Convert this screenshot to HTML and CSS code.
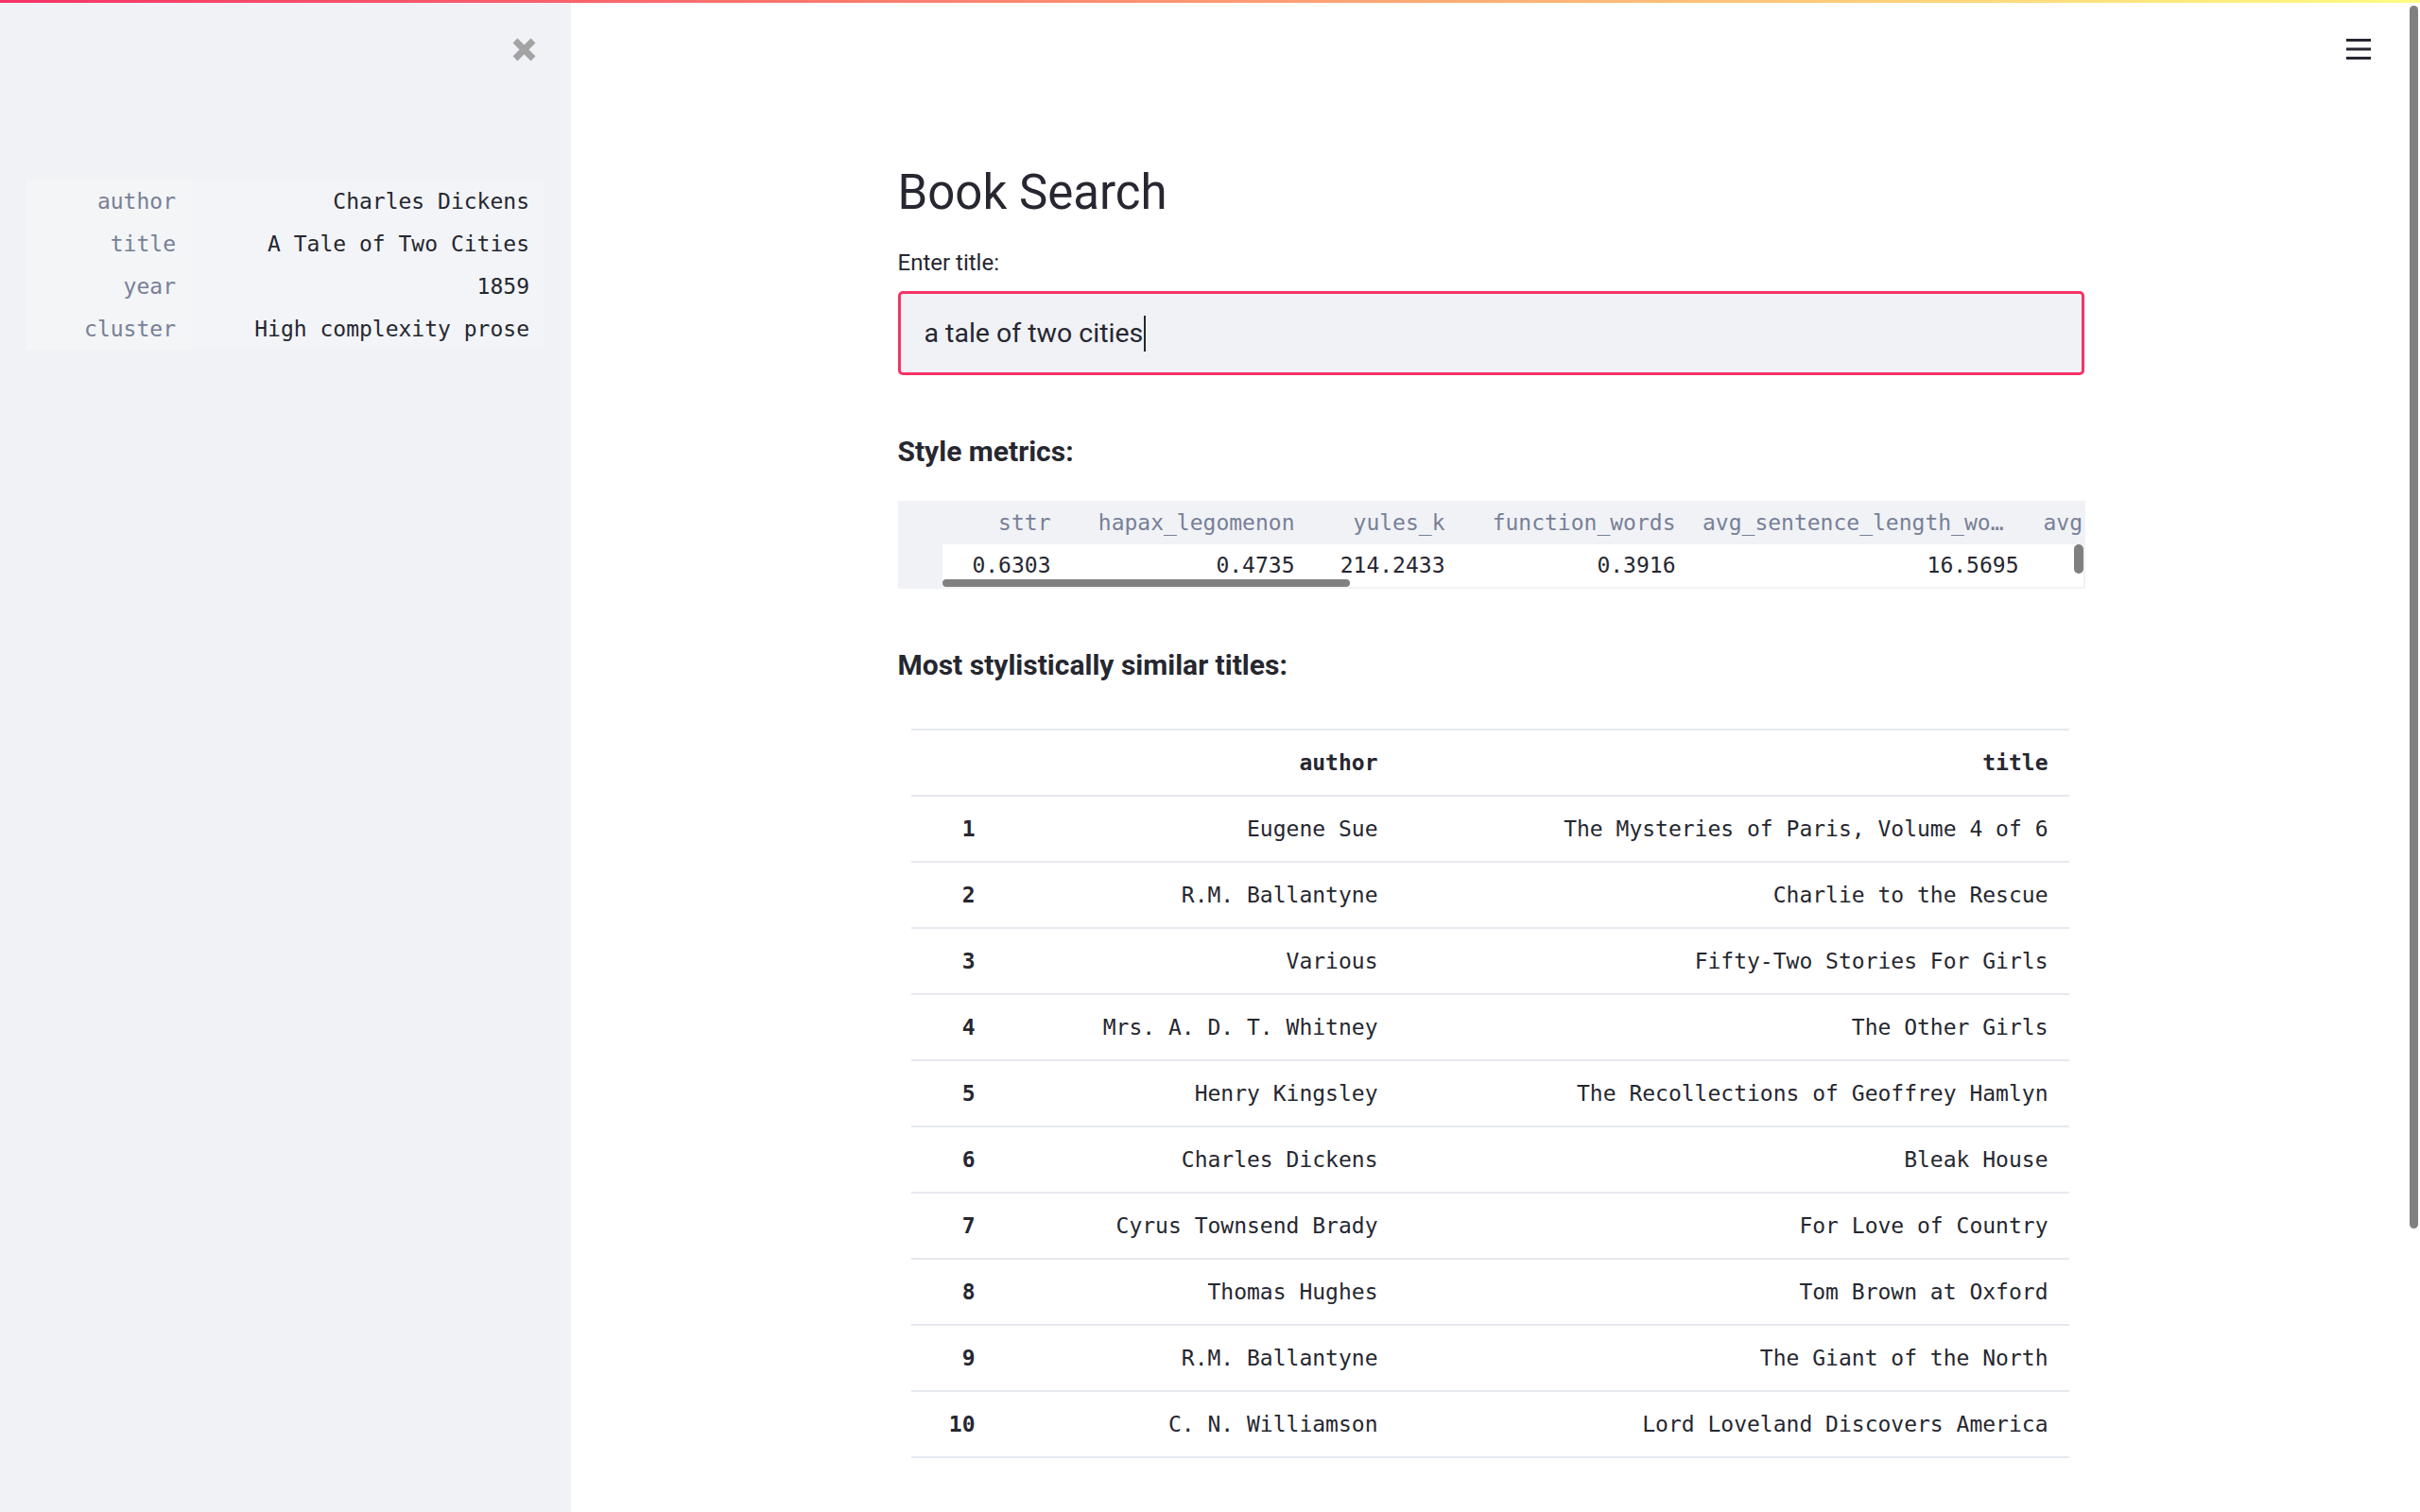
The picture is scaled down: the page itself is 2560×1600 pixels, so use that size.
FILE: index.html
```html
<!DOCTYPE html>
<html lang="en">
<head>
<meta charset="utf-8">
<title>Book Search</title>
<link rel="stylesheet" href="styles.css">
</head>
<body>
<div class="decoration"></div>
<div class="app">
  <aside class="sidebar">
    <button class="close" aria-label="Close sidebar">
      <svg viewBox="0 0 27 27" width="27" height="27"><path d="M4 4L23 23M23 4L4 23" stroke="#a3a3a3" stroke-width="7"/></svg>
    </button>
    <table class="kv">
      <tr><td class="k">author</td><td class="v">Charles Dickens</td></tr>
      <tr><td class="k">title</td><td class="v">A Tale of Two Cities</td></tr>
      <tr><td class="k">year</td><td class="v">1859</td></tr>
      <tr><td class="k">cluster</td><td class="v">High complexity prose</td></tr>
    </table>
  </aside>
  <main class="main">
    <div class="menu" aria-label="Menu">
      <svg viewBox="0 0 26 24" width="26" height="24"><rect x="0" y="1" width="26" height="3" fill="#262730"/><rect x="0" y="10.5" width="26" height="3" fill="#262730"/><rect x="0" y="20" width="26" height="3" fill="#262730"/></svg>
    </div>
    <div class="block">
      <h1 class="title">Book Search</h1>
      <label class="label">Enter title:</label>
      <div class="input"><span class="input-text">a tale of two cities</span><span class="caret"></span></div>
      <h3 class="sub sub-first">Style metrics:</h3>
      <div class="df">
        <div class="df-row df-head">
          <div class="c idx"></div>
          <div class="c w1">sttr</div>
          <div class="c w2">hapax_legomenon</div>
          <div class="c w3">yules_k</div>
          <div class="c w4">function_words</div>
          <div class="c w5 trunc">avg_sentence_length_wo…</div>
          <div class="c w6">avg</div>
        </div>
        <div class="df-row df-body">
          <div class="c idx"></div>
          <div class="c w1">0.6303</div>
          <div class="c w2">0.4735</div>
          <div class="c w3">214.2433</div>
          <div class="c w4">0.3916</div>
          <div class="c w5">16.5695</div>
          <div class="c w6"></div>
        </div>
        <div class="hscroll"></div>
        <div class="vscroll"></div>
      </div>
      <h3 class="sub sub-second">Most stylistically similar titles:</h3>
      <table class="tbl">
        <colgroup><col class="ci"><col class="ca"><col class="ct"></colgroup>
        <thead>
          <tr><th></th><th>author</th><th>title</th></tr>
        </thead>
        <tbody>
          <tr><th>1</th><td>Eugene Sue</td><td>The Mysteries of Paris, Volume 4 of 6</td></tr>
          <tr><th>2</th><td>R.M. Ballantyne</td><td>Charlie to the Rescue</td></tr>
          <tr><th>3</th><td>Various</td><td>Fifty-Two Stories For Girls</td></tr>
          <tr><th>4</th><td>Mrs. A. D. T. Whitney</td><td>The Other Girls</td></tr>
          <tr><th>5</th><td>Henry Kingsley</td><td>The Recollections of Geoffrey Hamlyn</td></tr>
          <tr><th>6</th><td>Charles Dickens</td><td>Bleak House</td></tr>
          <tr><th>7</th><td>Cyrus Townsend Brady</td><td>For Love of Country</td></tr>
          <tr><th>8</th><td>Thomas Hughes</td><td>Tom Brown at Oxford</td></tr>
          <tr><th>9</th><td>R.M. Ballantyne</td><td>The Giant of the North</td></tr>
          <tr><th>10</th><td>C. N. Williamson</td><td>Lord Loveland Discovers America</td></tr>
        </tbody>
      </table>
    </div>
  </main>
  <div class="page-scroll"></div>
</div>
</body>
</html>
```

FILE: styles.css
```css
* { box-sizing: border-box; }
html, body { margin: 0; padding: 0; height: 100%; overflow: hidden; }
body {
  font-family: Roboto, "Liberation Sans", sans-serif;
  color: #262730;
  background: #ffffff;
}
.decoration {
  position: fixed; top: 0; left: 0; right: 0; height: 3px; z-index: 10;
  background: linear-gradient(90deg, #f63366, #fffd80);
}
.app { display: flex; height: 1600px; }

/* Sidebar */
.sidebar {
  width: 604px; flex: none; background: #f0f2f6;
  padding: 39px 29px 0 28px;
  display: flex; flex-direction: column;
}
.close {
  align-self: flex-end; margin-right: 7px;
  width: 27px; height: 27px; padding: 0; border: 0; background: none; display: block;
}
.close svg { display: block; }
.kv {
  margin-top: 124px; width: 547px; border-collapse: collapse;
  font-family: "DejaVu Sans Mono", "Liberation Mono", monospace; font-size: 23px;
  background: rgba(255,255,255,0.15);
}
.kv td { height: 45px; padding: 0 15px 0 0; text-align: right; vertical-align: middle; white-space: nowrap; }
.kv .k { color: #788096; width: 174px; padding-right: 16px; background: rgba(255,255,255,0.1); }
.kv .v { color: #262730; }

/* Main */
.main { flex: 1; position: relative; padding: 173px 9px 0 0; }
.menu { position: absolute; top: 40px; right: 52px; width: 26px; height: 24px; }
.menu svg { display: block; }
.block { width: 1256px; margin: 0 auto; }
.title { font-size: 51px; line-height: 62px; font-weight: 400; margin: 0; color: #262730; }
.label { display: block; font-size: 24px; line-height: 28px; margin-top: 29px; }
.input {
  margin-top: 16px; height: 89px; width: 1255px;
  border: 3px solid #f63366; border-radius: 5px; background: #f0f2f6;
  padding: 0 25px; display: flex; align-items: center;
  font-size: 28.5px;
}
.caret { display: inline-block; width: 2px; height: 38px; background: #262730; margin-left: 1px; }
.sub { font-size: 30px; line-height: 36px; font-weight: 700; margin: 0; }
.sub-first { margin-top: 63px; }
.sub-second { margin-top: 63px; }

/* Dataframe */
.df {
  position: relative; margin-top: 34px; width: 1256px; overflow: hidden;
  background: #f0f2f6; padding-bottom: 2px;
  font-family: "DejaVu Sans Mono", "Liberation Mono", monospace; font-size: 23px;
}
.df-row { display: flex; white-space: nowrap; }
.df-head { height: 46px; color: #788096; }
.df-body { height: 45px; margin-right: 2px; overflow: hidden; color: #262730; }
.c { flex: none; text-align: right; padding-right: 14px; line-height: 46px; overflow: hidden; }
.df-body .c { line-height: 45px; }
.df-body .c:not(.idx) { background: #ffffff; }
.idx { width: 47px; }
.w1 { width: 129px; }
.w2 { width: 258px; }
.w3 { width: 159px; }
.w4 { width: 244px; }
.w5 { width: 363px; }
.w5.trunc { padding-right: 30px; }
.w6 { width: 54px; text-align: left; padding: 0 0 0 12px; }
.hscroll { position: absolute; left: 47px; top: 83px; width: 431px; height: 8px; border-radius: 4px; background: #808080; }
.vscroll { position: absolute; left: 1244px; top: 46px; width: 10px; height: 31px; border-radius: 5px; background: #808080; }

/* Table */
.tbl {
  margin: 49px 0 0 14px; width: 1225px; table-layout: fixed; border-collapse: collapse;
  font-family: "DejaVu Sans Mono", "Liberation Mono", monospace; font-size: 23px; color: #262730;
}
.ci { width: 90px; }
.ca { width: 426px; }
.ct { width: 709px; }
.tbl th, .tbl td {
  text-align: right; padding: 21px 22px 21px 0; line-height: 26px;
  border-top: 2px solid #e6e9ef; border-bottom: 2px solid #e6e9ef; white-space: nowrap;
}
.tbl th { font-weight: 700; }
.tbl td { font-weight: 400; }

.page-scroll {
  position: fixed; right: 2px; top: 6px; width: 9px; height: 1294px;
  border-radius: 5px; background: #808080;
}
```
